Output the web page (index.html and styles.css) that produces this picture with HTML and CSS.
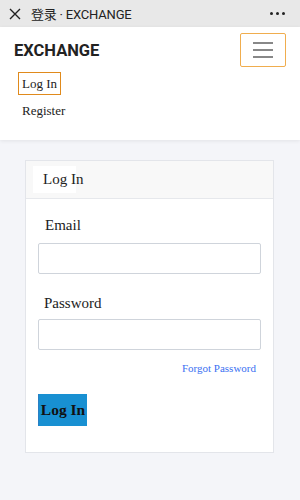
FILE: index.html
```html
<!DOCTYPE html>
<html>
<head>
<meta charset="utf-8">
<link rel="stylesheet" href="styles.css">
</head>
<body>
<div class="topbar">
  <span class="close">
    <svg width="12" height="12" viewBox="0 0 12 12"><path d="M1 1 L11 11 M11 1 L1 11" stroke="#222" stroke-width="1.4" fill="none"/></svg>
  </span>
  <span class="title">登录 · EXCHANGE</span>
  <span class="more"><i></i><i></i><i></i></span>
</div>
<nav class="navbar">
  <div class="brandrow">
    <span class="brand">EXCHANGE</span>
    <button class="toggler"><span></span><span></span><span></span></button>
  </div>
  <ul class="links">
    <li><a class="active">Log In</a></li>
    <li><a>Register</a></li>
  </ul>
</nav>
<main class="main">
  <div class="card">
    <div class="card-header"><span class="hd">Log In</span></div>
    <div class="card-body">
      <label class="lbl">Email</label>
      <input class="inp" type="text">
      <label class="lbl lbl2">Password</label>
      <input class="inp" type="password">
      <div class="forgot"><a>Forgot Password</a></div>
      <button class="btn">Log In</button>
    </div>
  </div>
</main>
</body>
</html>
```
FILE: styles.css
```css
html, body { margin: 0; padding: 0; }
body { background: #f4f5f9; font-family: "Liberation Serif", serif; color: #111; width: 300px; height: 500px; overflow: hidden; }
.topbar { height: 27px; background: #e8e8e8; display: flex; align-items: center; font-family: Roboto, "Noto Sans CJK SC", sans-serif; }
.close { width: 12px; height: 12px; margin-left: 9px; display: flex; }
.title { margin-left: 10px; font-size: 13px; color: #222; flex: 1; letter-spacing: -0.2px; }
.more { display: flex; gap: 3px; margin-right: 15px; }
.more i { width: 3px; height: 3px; background: #222; border-radius: 50%; display: block; }
.navbar { background: #fff; height: 113px; box-shadow: 0 1px 4px rgba(0,0,0,0.08); position: relative; }
.brandrow { display: flex; justify-content: space-between; align-items: center; padding: 6px 14px 0 14px; }
.brand { font-family: Roboto, "Liberation Sans", sans-serif; font-weight: bold; font-size: 16.5px; color: #222; }
.toggler { width: 46px; height: 34px; border: 1px solid #f0ad4e; background: #fff; border-radius: 2px; display: flex; flex-direction: column; align-items: center; justify-content: center; gap: 5px; padding: 0; box-sizing: border-box; }
.toggler span { width: 20px; height: 2px; background: #888; display: block; }
.links { list-style: none; margin: 5px 0 0 0; padding: 0 0 0 18px; font-size: 13px; }
.links li { height: 23px; display: flex; align-items: center; }
.links li + li { margin-top: 4px; }
.links a { color: #222; padding: 2px 3px; border: 1px solid transparent; line-height: 17px; }
.links a.active { border: 1.5px solid #e08a1c; }
.main { padding: 20px 25px 0 25px; }
.card { width: 249px; box-sizing: border-box; background: #fff; border: 1px solid #e3e5ea; }
.card-header { height: 37px; background: #f8f8f8; border-bottom: 1px solid #e6e8ec; display: flex; align-items: center; padding-left: 7px; }
.hd { display: inline-block; background: #fff; width: 33px; padding-left: 10px; height: 27px; line-height: 27px; white-space: nowrap; font-size: 15px; color: #222; }
.card-body { padding: 16px 12px 26px 12px; display: flex; flex-direction: column; align-items: flex-start; }
.lbl { font-size: 15px; color: #222; padding-left: 7px; height: 20px; line-height: 20px; margin-bottom: 8px; }
.lbl2 { margin-top: 19px; padding-left: 6px; margin-bottom: 6px; }
.inp { width: 223px; height: 31px; box-sizing: border-box; border: 1px solid #cfd4db; border-radius: 2px; margin: 0; background: #fff; }
.forgot { align-self: stretch; text-align: right; font-size: 11px; padding-right: 5px; margin-top: 11px; height: 14px; line-height: 14px; }
.forgot a { color: #3a6ff2; }
.btn { margin-top: 19px; width: 49px; height: 32px; background: #1890d2; border: none; border-left: 1px solid #2a7fc4; font-family: "Liberation Serif", serif; font-weight: bold; font-size: 15.5px; color: #111; padding: 0; }
```
